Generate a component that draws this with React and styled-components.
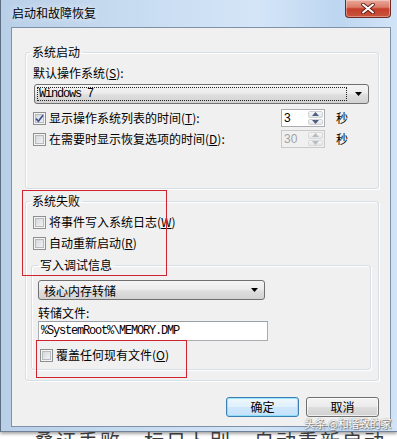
import styled, { createGlobalStyle } from "styled-components";

const GlobalStyle = createGlobalStyle`
  html, body {
    margin: 0;
    padding: 0;
    background: #ffffff;
  }
  body {
    font-family: "Noto Sans CJK SC", "Noto Sans", sans-serif;
    font-size: 12px;
    color: #000;
  }
`;

const Page = styled.div`
  position: relative;
  width: 397px;
  height: 439px;
  overflow: hidden;
  display: flex;
  flex-direction: column;
`;

const Window = styled.div`
  height: 432px;
  flex: none;
  display: flex;
  flex-direction: column;
  box-sizing: border-box;
  border-left: 1px solid #5d6e80;
  border-bottom: 1px solid #6f8297;
  background: linear-gradient(90deg, #b9cfe8 0%, #c8dcf1 35%, #d4e5f7 65%, #bdd6f1 85%, #d2e4f7 100%);
  box-shadow: 0 2px 3px rgba(0, 0, 0, 0.35);
`;

const TitleBar = styled.div`
  height: 27px;
  flex: none;
  display: flex;
  align-items: flex-start;
`;

const Title = styled.div`
  padding: 5px 0 0 11px;
  line-height: 16px;
  font-size: 12px;
  color: #000;
  text-shadow: 0 0 6px rgba(255, 255, 255, 0.9);
`;

const CloseButton = styled.div`
  margin-left: auto;
  margin-right: 6px;
  width: 46px;
  height: 18px;
  box-sizing: border-box;
  border: 1px solid #6e2a22;
  border-top: none;
  border-radius: 0 0 4px 4px;
  background: linear-gradient(180deg, #e9a89b 0%, #dc7d6a 42%, #c43f2b 52%, #c9533c 100%);
  box-shadow: inset 0 0 0 1px rgba(255, 255, 255, 0.35);
  display: flex;
  align-items: center;
  justify-content: center;
`;

const Body = styled.div`
  flex: 1;
  display: flex;
  padding: 0 6px 4px 10px;
`;

const Panel = styled.div`
  position: relative;
  flex: 1;
  display: flex;
  flex-direction: column;
  background: #f0f0f0;
  border: 1px solid #7f91a8;
  padding: 16px 11px 0 13px;
`;

const Group = styled.fieldset`
  margin: ${(p) => p.$mt || 0}px ${(p) => p.$mr || 0}px 0 ${(p) => p.$ml || 0}px;
  padding: 0 0 ${(p) => p.$pb || 0}px 0;
  border: 1px solid #d5dfe5;
  border-radius: 3px;
  box-shadow: inset 1px 1px 0 #ffffff, 1px 1px 0 #ffffff;
  min-width: 0;
  display: flex;
  flex-direction: column;
`;

const Caption = styled.legend`
  margin-left: ${(p) => p.$offset}px;
  padding: 0 2px;
  line-height: 16px;
  font-size: 12px;
`;

const Label = styled.div`
  margin: ${(p) => p.$mt || 0}px 0 0 ${(p) => p.$ml || 0}px;
  line-height: 16px;
`;

const Key = styled.span`
  text-decoration: underline;
`;

const Combo = styled.div`
  margin: ${(p) => p.$mt || 0}px 0 0 ${(p) => p.$ml || 0}px;
  width: ${(p) => p.$w}px;
  height: 20px;
  box-sizing: border-box;
  border: 1px solid #707070;
  border-radius: 3px;
  background: linear-gradient(180deg, #f4f4f4 0%, #ececec 45%, #dedede 55%, #d2d2d2 100%);
  display: flex;
  align-items: center;
  padding: 0 6px 0 2px;
`;

const ComboText = styled.div`
  flex: 1;
  height: 14px;
  box-sizing: border-box;
  border: 1px dotted ${(p) => (p.$focus ? "#202020" : "transparent")};
  padding-left: ${(p) => p.$pad}px;
  display: flex;
  align-items: center;
  margin-right: 8px;
  font-family: ${(p) =>
    p.$mono
      ? '"Liberation Mono", monospace'
      : '"Noto Sans CJK SC", sans-serif'};
  font-size: 12px;
  letter-spacing: ${(p) => (p.$mono ? "-1.2px" : "0")};
`;

const Row = styled.div`
  margin-top: ${(p) => p.$mt || 0}px;
  padding-left: ${(p) => p.$pl || 0}px;
  height: ${(p) => p.$h || 16}px;
  display: flex;
  align-items: center;
`;

const CheckLabel = styled.div`
  display: flex;
  align-items: center;
  gap: 3px;
  width: ${(p) => (p.$w ? `${p.$w}px` : "auto")};
  line-height: 16px;
  flex: none;
`;

const Box = styled.span`
  width: 13px;
  height: 13px;
  flex: none;
  box-sizing: border-box;
  border: 1px solid #8e8f8f;
  background: linear-gradient(135deg, #cdd0d5 0%, #e6e7e9 55%, #f7f7f7 100%);
  box-shadow: inset 0 0 0 1px #f4f4f4, inset 0 0 0 2px #b7bbc1;
  display: flex;
  align-items: center;
  justify-content: center;
`;

const Spin = styled.div`
  width: 44px;
  height: 18px;
  flex: none;
  box-sizing: border-box;
  border: 1px solid ${(p) => (p.$disabled ? "#c9c9c9" : "#abadb3")};
  background: ${(p) => (p.$disabled ? "#f0f0f0" : "#ffffff")};
  display: flex;
`;

const SpinValue = styled.div`
  flex: 1;
  padding-left: 2px;
  line-height: 16px;
  font-family: "Liberation Sans", sans-serif;
  font-size: 12px;
  color: ${(p) => (p.$disabled ? "#a3a3a3" : "#000")};
`;

const SpinButtons = styled.div`
  width: 16px;
  display: flex;
  flex-direction: column;
  padding: 1px 1px 1px 0;
  box-sizing: border-box;
  gap: 1px;
`;

const SpinButton = styled.div`
  flex: 1;
  box-sizing: border-box;
  border: 1px solid ${(p) => (p.$disabled ? "#dadada" : "#cfd3d8")};
  border-radius: 2px;
  background: linear-gradient(180deg, #f6f6f6, #e4e6e9);
  display: flex;
  align-items: center;
  justify-content: center;
`;

const Unit = styled.div`
  margin-left: 11px;
  line-height: 16px;
`;

const TextInput = styled.div`
  margin: 0 0 0 6px;
  width: 230px;
  height: 20px;
  box-sizing: border-box;
  border: 1px solid #abadb3;
  border-top-color: #9aa0a8;
  background: #ffffff;
  display: flex;
  align-items: center;
  padding-left: 2px;
  font-family: "Liberation Mono", monospace;
  font-size: 12px;
  letter-spacing: -1.2px;
`;

const ButtonRow = styled.div`
  margin-top: 16px;
  display: flex;
  justify-content: flex-end;
  gap: 7px;
`;

const Button = styled.div`
  width: 73px;
  height: 20px;
  box-sizing: border-box;
  border: 1px solid ${(p) => (p.$default ? "#3c7fb1" : "#707070")};
  border-radius: 3px;
  background: ${(p) =>
    p.$default
      ? "linear-gradient(180deg, #eef7fd 0%, #e0f0fc 48%, #cfe7fb 52%, #c3e1fa 100%)"
      : "linear-gradient(180deg, #f3f3f3 0%, #ebebeb 48%, #dddddd 52%, #d0d0d0 100%)"};
  box-shadow: inset 0 0 0 1px
    ${(p) => (p.$default ? "rgba(120, 220, 250, 0.7)" : "rgba(255, 255, 255, 0.7)")};
  display: flex;
  align-items: center;
  justify-content: center;
  line-height: 16px;
`;

const Annotation = styled.div`
  position: absolute;
  left: ${(p) => p.$x}px;
  top: ${(p) => p.$y}px;
  width: ${(p) => p.$w}px;
  height: ${(p) => p.$h}px;
  box-sizing: border-box;
  border: 1px solid #d0232f;
  pointer-events: none;
`;

const Watermark = styled.div`
  position: absolute;
  left: 304px;
  top: 416px;
  font-size: 11px;
  line-height: 14px;
  color: #ffffff;
  letter-spacing: -0.3px;
  text-shadow: 0 0 1px #666, 1px 1px 1px #777;
`;

const Backdrop = styled.div`
  height: 7px;
  flex: none;
  overflow: hidden;
  padding-left: 34px;
`;

const BackdropText = styled.div`
  margin-top: -1px;
  font-size: 20px;
  line-height: 20px;
  color: #3a3a3a;
  white-space: nowrap;
  letter-spacing: 2px;
`;

const CheckMark = () => (
  <svg width="9" height="9" viewBox="0 0 9 9">
    <path d="M1 4.6 L3.4 7.2 L8 1.2" fill="none" stroke="#3b4f8c" strokeWidth="1.6" />
  </svg>
);

const Check = ({ checked }) => <Box>{checked && <CheckMark />}</Box>;

const Arrow = ({ up, color }) => (
  <svg width="7" height="4" viewBox="0 0 7 4">
    <path d={up ? "M0 4 L3.5 0 L7 4 Z" : "M0 0 L7 0 L3.5 4 Z"} fill={color} />
  </svg>
);

const DropArrow = () => (
  <svg width="7" height="4" viewBox="0 0 7 4">
    <path d="M0 0 L7 0 L3.5 4 Z" fill="#000" />
  </svg>
);

const Spinner = ({ value, disabled }) => {
  const c = disabled ? "#b9bcc0" : "#4d5f82";
  return (
    <Spin $disabled={disabled}>
      <SpinValue $disabled={disabled}>{value}</SpinValue>
      <SpinButtons>
        <SpinButton $disabled={disabled}>
          <Arrow up color={c} />
        </SpinButton>
        <SpinButton $disabled={disabled}>
          <Arrow color={c} />
        </SpinButton>
      </SpinButtons>
    </Spin>
  );
};

export default function App() {
  return (
    <>
      <GlobalStyle />
      <Page>
        <Window>
          <TitleBar>
            <Title>启动和故障恢复</Title>
            <CloseButton>
              <svg width="14" height="11" viewBox="0 0 14 11">
                <path d="M2 1.5 L12 9.5 M12 1.5 L2 9.5" stroke="#5a1a12" strokeWidth="3.6" strokeLinecap="round" />
                <path d="M2 1.5 L12 9.5 M12 1.5 L2 9.5" stroke="#ffffff" strokeWidth="2" strokeLinecap="round" />
              </svg>
            </CloseButton>
          </TitleBar>
          <Body>
            <Panel>
              <Group $pb={40}>
                <Caption $offset={4}>系统启动</Caption>
                <Label $mt={5} $ml={7}>
                  默认操作系统(<Key>S</Key>):
                </Label>
                <Combo $mt={3} $ml={8} $w={335}>
                  <ComboText $focus $mono $pad={1}>
                    Windows 7
                  </ComboText>
                  <DropArrow />
                </Combo>
                <Row $mt={5} $pl={7} $h={18}>
                  <CheckLabel $w={248}>
                    <Check checked />
                    <span>
                      显示操作系统列表的时间(<Key>T</Key>):
                    </span>
                  </CheckLabel>
                  <Spinner value="3" />
                  <Unit>秒</Unit>
                </Row>
                <Row $mt={3} $pl={7} $h={18}>
                  <CheckLabel $w={248}>
                    <Check />
                    <span>
                      在需要时显示恢复选项的时间(<Key>D</Key>):
                    </span>
                  </CheckLabel>
                  <Spinner value="30" disabled />
                  <Unit>秒</Unit>
                </Row>
              </Group>

              <Group $mt={4} $pb={10}>
                <Caption $offset={4}>系统失败</Caption>
                <Row $mt={5} $pl={7}>
                  <CheckLabel>
                    <Check />
                    <span>
                      将事件写入系统日志(<Key>W</Key>)
                    </span>
                  </CheckLabel>
                </Row>
                <Row $mt={5} $pl={7}>
                  <CheckLabel>
                    <Check />
                    <span>
                      自动重新启动(<Key>R</Key>)
                    </span>
                  </CheckLabel>
                </Row>
                <Group $mt={6} $ml={5} $mr={7} $pb={6}>
                  <Caption $offset={6}>写入调试信息</Caption>
                  <Combo $mt={7} $ml={6} $w={227}>
                    <ComboText $pad={2}>核心内存转储</ComboText>
                    <DropArrow />
                  </Combo>
                  <Label $mt={5} $ml={6}>
                    转储文件:
                  </Label>
                  <TextInput>%SystemRoot%\MEMORY.DMP</TextInput>
                  <Row $mt={6} $pl={8}>
                    <CheckLabel>
                      <Check />
                      <span>
                        覆盖任何现有文件(<Key>O</Key>)
                      </span>
                    </CheckLabel>
                  </Row>
                </Group>
              </Group>

              <ButtonRow>
                <Button $default>确定</Button>
                <Button>取消</Button>
              </ButtonRow>

              <Annotation $x={10} $y={162} $w={145} $h={86} />
              <Annotation $x={24} $y={312} $w={151} $h={38} />
            </Panel>
          </Body>
        </Window>
        <Backdrop>
          <BackdropText>叠证丢败，标日卜别，自动重新启动，时效对手机</BackdropText>
        </Backdrop>
        <Watermark>头条 @和谐致的家</Watermark>
      </Page>
    </>
  );
}
